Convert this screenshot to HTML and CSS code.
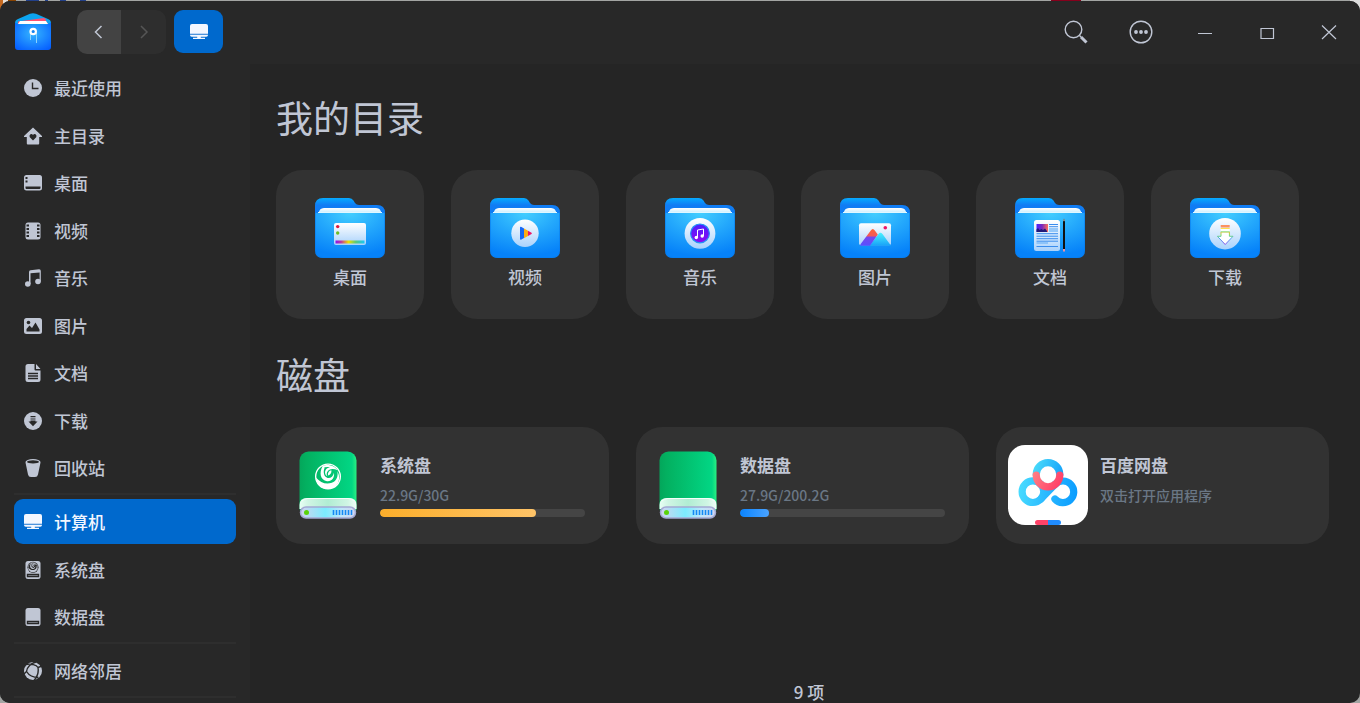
FILE: index.html
```html
<!DOCTYPE html>
<html lang="zh-CN">
<head>
<meta charset="utf-8">
<title>计算机</title>
<link rel="stylesheet" href="styles.css">
</head>
<body>
<svg class="defs" width="0" height="0" aria-hidden="true">
  <defs>
    <linearGradient id="folderBack" x1="0" y1="0" x2="0" y2="1"><stop offset="0" stop-color="#06abff"/><stop offset=".3" stop-color="#107cf4"/><stop offset="1" stop-color="#0a7cf5"/></linearGradient>
    <radialGradient id="folderFront" cx=".5" cy="0" r=".95"><stop offset="0" stop-color="#42ceff"/><stop offset=".5" stop-color="#22a6fc"/><stop offset="1" stop-color="#0682f9"/></radialGradient>
    <linearGradient id="plate" x1="0" y1="0" x2="0" y2="1"><stop offset="0" stop-color="#fff"/><stop offset="1" stop-color="#a9d2fc"/></linearGradient>
    <linearGradient id="paper" x1="0" y1="0" x2="0" y2="1"><stop offset="0" stop-color="#fff"/><stop offset="1" stop-color="#b9e9ff"/></linearGradient>
    <linearGradient id="rainbow"><stop offset="0" stop-color="#8a10ee"/><stop offset=".2" stop-color="#c33b98"/><stop offset=".45" stop-color="#eee000"/><stop offset=".7" stop-color="#5ac87c"/><stop offset="1" stop-color="#16c8fa"/></linearGradient>
    <linearGradient id="violet" x1="0" y1="0" x2="0" y2="1"><stop offset="0" stop-color="#4820ff"/><stop offset="1" stop-color="#9108f0"/></linearGradient>
    <linearGradient id="peakA" x1="0" y1="0" x2="0" y2="1"><stop offset="0" stop-color="#ff6434"/><stop offset=".4" stop-color="#f35a58"/><stop offset=".5" stop-color="#7448ee"/><stop offset="1" stop-color="#5950ff"/></linearGradient>
    <linearGradient id="peakB" x1="0" y1="0" x2="0" y2="1"><stop offset="0" stop-color="#4af2ff"/><stop offset="1" stop-color="#18a2f8"/></linearGradient>
    <linearGradient id="photo"><stop offset="0" stop-color="#4a20ff"/><stop offset=".5" stop-color="#7c2aba"/><stop offset="1" stop-color="#ff705a"/></linearGradient>
    <linearGradient id="arrow" x1="0" y1="0" x2="0" y2="1"><stop offset="0" stop-color="#ffb52e"/><stop offset=".25" stop-color="#7be05a"/><stop offset=".5" stop-color="#49a8f2"/><stop offset="1" stop-color="#8a50e8"/></linearGradient>
    <linearGradient id="green"><stop offset="0" stop-color="#04a65b"/><stop offset=".12" stop-color="#03b060"/><stop offset=".92" stop-color="#02d684"/><stop offset="1" stop-color="#2aef83"/></linearGradient>
    <linearGradient id="band"><stop offset="0" stop-color="#e8fff4"/><stop offset=".15" stop-color="#d0f5e4"/><stop offset=".5" stop-color="#b1edd3"/><stop offset=".85" stop-color="#d0f5e4"/><stop offset="1" stop-color="#f0fff8"/></linearGradient>
    <linearGradient id="strip"><stop offset="0" stop-color="#d2d4ee"/><stop offset=".45" stop-color="#7cecff"/><stop offset=".75" stop-color="#bfe6fb"/><stop offset="1" stop-color="#d2d4ee"/></linearGradient>
    <linearGradient id="cloud" gradientUnits="userSpaceOnUse" x1="10" y1="40" x2="70" y2="48"><stop offset="0" stop-color="#49ddff"/><stop offset=".5" stop-color="#29b8ff"/><stop offset="1" stop-color="#0a9cff"/></linearGradient>
    <linearGradient id="cloudTop" gradientUnits="userSpaceOnUse" x1="26" y1="20" x2="54" y2="30"><stop offset="0" stop-color="#49dbfa"/><stop offset="1" stop-color="#15a2fa"/></linearGradient>
    <linearGradient id="cloudRed" gradientUnits="userSpaceOnUse" x1="26" y1="28" x2="52" y2="42"><stop offset="0" stop-color="#ff7d84"/><stop offset="1" stop-color="#ff3d67"/></linearGradient>
    <radialGradient id="env" cx=".5" cy=".4" r=".7"><stop offset="0" stop-color="#35b5ff"/><stop offset="1" stop-color="#0660ff"/></radialGradient>
    <symbol id="folder" viewBox="0 0 70 60">
      <path d="M0 8Q0 0 8 0H34Q37 0 38.500 2.500L40 5Q41.500 7 44 7H62Q70 7 70 15V24H0Z" fill="url(#folderBack)"/>
      <path d="M3.500 16Q4 10 9 10H61Q66 10 66.500 16Z" fill="url(#paper)"/>
      <path d="M0 15H70V52Q70 60 62 60H8Q0 60 0 52Z" fill="url(#folderFront)"/>
      <path d="M.5 15V52Q.5 59.500 8 59.500H62Q69.500 59.500 69.500 52V15" fill="none" stroke="#087cec" stroke-opacity=".55"/>
      <path d="M3 14.500H67" stroke="#dff7ff" stroke-width="1"/>
    </symbol>
    <symbol id="drive" viewBox="0 0 58 68">
      <rect x=".5" y=".5" width="57" height="66" rx="9" fill="url(#green)"/>
      <path d="M.5 58V54Q.5 47 8 47H50Q57.500 47 57.500 54V58Z" fill="url(#band)"/>
      <path d="M3 50Q5 47.500 9 47.500H49Q53 47.500 55 50" fill="none" stroke="#f4fffa"/>
      <rect x="1.500" y="56" width="55" height="11" rx="5.500" fill="url(#strip)" stroke="#a4a9d4" stroke-width="1.500"/>
      <circle cx="7.500" cy="61.500" r="2.500" fill="#5bd30a"/>
      <path d="M34.500 59v5M37.500 59v5M40.500 59v5M43.500 59v5M46.500 59v5M49.500 59v5M52.500 59v5" stroke="#1489f4" stroke-width="1.600"/>
    </symbol>
    <symbol id="swirl" viewBox="0 0 28 28">
      <circle cx="14" cy="14" r="12.800" fill="none" stroke="currentColor" stroke-width="1.400"/>
      <path d="M1.500 15C6 20.500 12 22.500 18 20.500C23 18.500 25 13.500 23.500 8.500C28.500 16 24 27 14 27C7 27 2 22 1.500 15Z" fill="currentColor"/>
      <path d="M8.500 3C4.500 10 6 17.500 13 18.800C18 19.300 21 15 20.200 10C19.300 14 16.800 16 13.600 15.500C9.800 14.500 8.600 9.500 10.500 5Z" fill="currentColor"/>
      <path d="M8.500 2.500C14 1 21 2.500 24 7.500C19.500 5.300 15 5.800 13 9.500C12.200 11.500 12.600 13.500 14.500 14C10.500 13.500 10 8.500 12.500 6C13.500 5 15 4.500 16 4.300C13.500 3.800 11 4.200 8.500 5Z" fill="currentColor"/>
      <path d="M14 13C13.500 10 15 8 17.500 7.500C18 10 16.500 12.500 14 13Z" fill="currentColor"/>
    </symbol>
    <symbol id="monitor" viewBox="0 0 18 18">
      <path d="M0 3Q0 1 2 1H16Q18 1 18 3V11H0Z" fill="currentColor"/>
      <path d="M0 11.700H18V12Q18 13.700 16.300 13.700H1.700Q0 13.700 0 12ZM7.200 13.500h3.600v1.200H15v1.300H3v-1.300h4.200Z" fill="currentColor"/>
      <path d="M0 10.900H18" stroke="#7aaee7" stroke-width=".7"/>
    </symbol>
  </defs>
</svg>
<div class="window">
  <header class="titlebar">
    <svg class="app-icon" viewBox="0 0 36 37" aria-hidden="true">
      <path d="M0 10Q0 7 3 6L15 .8Q18-.3 21 .8L33 6Q36 7 36 10V20H0Z" fill="#0ca4ef"/>
      <path d="M3 8.500L29 5Q31 5.500 31 8L33 11H3Z" fill="#ff5070"/>
      <path d="M3 11L5 8H31L33 11Z" fill="#fff"/>
      <path d="M0 9.500L4 11.500H32L36 9.500V34Q36 37 33 37H3Q0 37 0 34Z" fill="url(#env)"/>
      <path d="M15.500 20V27M21.500 20V30" stroke="#8bd4ff" stroke-width="1"/>
      <circle cx="18.200" cy="18.500" r="2.700" fill="#1685ef" stroke="#fff" stroke-width="2.200"/>
    </svg>
    <nav class="history" aria-label="历史">
      <button class="history-button" type="button" aria-label="后退"><svg viewBox="0 0 16 16"><path d="M10.500 2L4.500 8L10.500 14"/></svg></button>
      <button class="history-button history-button-off" type="button" aria-label="前进" disabled><svg viewBox="0 0 16 16"><path d="M5 2L11 8L5 14"/></svg></button>
    </nav>
    <button class="crumb" type="button" aria-label="计算机"><svg viewBox="0 0 18 18"><use href="#monitor"/></svg></button>
    <div class="tools">
      <button class="tool" type="button" aria-label="搜索"><svg viewBox="0 0 24 24"><circle cx="9.500" cy="9.500" r="8.300"/><path d="M15.500 15.500L17 17"/><path d="M17 17L22.500 22.500" stroke-width="3"/></svg></button>
      <button class="tool" type="button" aria-label="菜单"><svg viewBox="0 0 24 24"><circle cx="12" cy="12" r="10.800"/><path d="M7 12h.01M12 12h.01M17 12h.01" stroke-width="3.800" stroke-linecap="round"/></svg></button>
    </div>
    <div class="window-buttons">
      <button class="window-button" type="button" aria-label="最小化"><svg viewBox="0 0 16 16"><path d="M1 9.500H15"/></svg></button>
      <button class="window-button" type="button" aria-label="最大化"><svg viewBox="0 0 16 16"><path d="M2 4.500H14.500V14.500H2Z"/></svg></button>
      <button class="window-button" type="button" aria-label="关闭"><svg viewBox="0 0 16 16"><path d="M1 1.500L15 15M15 1.500L1 15"/></svg></button>
    </div>
  </header>
  <div class="body">
    <nav class="sidebar" aria-label="位置">
      <div class="places">
        <a class="place" href="#recent"><svg viewBox="0 0 18 18"><circle cx="9" cy="9" r="9"/><path class="cut-line" d="M8.500 3.500V9.500H14.500"/></svg>最近使用</a>
        <a class="place" href="#home"><svg viewBox="0 0 18 18"><path d="M9 .5L18 9V10H15.200V16.500Q15.200 17.500 14.200 17.500H3.800Q2.800 17.500 2.800 16.500V10H0V9Z"/><path class="cut" d="M9 13.500L5.800 10.200C4.500 8 7.500 5.800 9 8C10.500 5.800 13.500 8 12.200 10.200Z"/></svg>主目录</a>
        <a class="place" href="#desktop"><svg viewBox="0 0 18 18"><rect y="1" width="18" height="15.500" rx="2.500"/><path class="cut" d="M1.500 3H3.500V5H1.500ZM1.500 6.500H3.500V8.500H1.500ZM1.500 12.500H16.500V14Q16.500 15 15.500 15H2.500Q1.500 15 1.500 14Z"/></svg>桌面</a>
        <a class="place" href="#videos"><svg viewBox="0 0 18 18"><rect x="1.500" y=".5" width="15" height="17" rx="2.500"/><path class="cut" d="M2.500 2.500h2.500v2H2.500ZM2.500 6h2.500v2H2.500ZM2.500 9.500h2.500v2H2.500ZM2.500 13h2.500v2H2.500ZM13 2.500h2.500v2H13ZM13 6h2.500v2H13ZM13 9.500h2.500v2H13ZM13 13h2.500v2H13Z"/></svg>视频</a>
        <a class="place" href="#music"><svg viewBox="0 0 18 18"><circle cx="3.800" cy="15" r="2.800"/><circle cx="14" cy="12.500" r="2.800"/><path d="M5 15V3Q5 1.400 6.500 1.200L15 .3Q16.800.2 16.800 2V12.500H15.600V3.500L6.500 4.300V15Z"/></svg>音乐</a>
        <a class="place" href="#pictures"><svg viewBox="0 0 18 18"><rect y="1" width="18" height="16" rx="2.500"/><circle class="cut" cx="4.500" cy="5.500" r="1.800"/><path class="cut" d="M2.500 14.500V12L5.500 8.500L8 11L11.500 5.500L15.500 12.500V14.500Z"/></svg>图片</a>
        <a class="place" href="#documents"><svg viewBox="0 0 18 18"><path d="M4 0H10.500V5.500Q10.500 6.500 11.500 6.500H16.500V15.500Q16.500 18 14 18H4Q1.500 18 1.500 15.500V2.500Q1.500 0 4 0ZM12 0L16.500 5H12Z"/><path class="cut-line" stroke-width="1.100" d="M4 9.500H14M4 12H14M4 14.500H14"/></svg>文档</a>
        <a class="place" href="#downloads"><svg viewBox="0 0 18 18"><circle cx="9" cy="9" r="9"/><path class="cut" d="M6.500 4H11.500V5.200H6.500ZM6.500 6.400H11.500V7.400H6.500ZM6.500 8.500H11.500V9.500H13.500L9 14.300L4.500 9.500H6.500Z"/></svg>下载</a>
        <a class="place" href="#trash"><svg viewBox="0 0 18 18"><path d="M1.500 3.500L4 15.500Q4.500 18 7 18H11Q13.500 18 14 15.500L16.500 3.500Z"/><ellipse cx="9" cy="3" rx="7.500" ry="3"/><ellipse class="cut" cx="9" cy="2.900" rx="6" ry="1.600"/></svg>回收站</a>
      </div>
      <hr class="rule">
      <div class="places">
        <a class="place place-current" href="#computer" aria-current="page"><svg viewBox="0 0 18 18"><use href="#monitor"/></svg>计算机</a>
        <a class="place" href="#system"><svg viewBox="0 0 18 18"><rect x="1.500" width="15" height="18" rx="2.500"/><circle class="cut" cx="9" cy="6.300" r="5.500"/><svg class="mini-mark" x="3.800" y="1.100" width="10.400" height="10.400"><use href="#swirl"/></svg><path class="cut-line" stroke-width="1" d="M3.500 13.500H14.500V15.500H3.500Z"/></svg>系统盘</a>
        <a class="place" href="#data"><svg viewBox="0 0 18 18"><rect x="1.500" width="15" height="18" rx="2.500"/><path class="cut-line" stroke-width="1" d="M3.500 13.500H14.500V15.500H3.500Z"/></svg>数据盘</a>
      </div>
      <hr class="rule">
      <div class="places">
        <a class="place" href="#network"><svg viewBox="0 0 18 18"><circle cx="9" cy="9" r="9"/><path class="cut-line" d="M12 0C7 1 3 5 2.500 9.500C5 13.500 9 15.500 14.500 15.500M2 2.500C7 1.500 12.500 3 14 5.500C15 11 13 15 10 18.500M0 12.500Q1 10.500 2.500 9.500M14 5.500Q16.500 4.500 17 4.500"/></svg>网络邻居</a>
      </div>
      <hr class="rule">
    </nav>
    <main class="main">
      <section>
        <h2 class="heading">我的目录</h2>
        <div class="folders">
          <a class="folder" href="#desktop"><svg viewBox="0 0 70 60"><use href="#folder"/><rect x="19" y="25" width="32" height="22" rx="2" fill="url(#plate)"/><rect x="20.500" y="42.500" width="29" height="3" fill="url(#rainbow)"/><circle cx="22.700" cy="28.600" r="1.700" fill="#df183c"/><circle cx="22.700" cy="35" r="1.700" fill="#6bbd24"/></svg>桌面</a>
          <a class="folder" href="#videos"><svg viewBox="0 0 70 60"><use href="#folder"/><circle cx="35" cy="35.300" r="13.700" fill="url(#plate)"/><path d="M30 29.500Q30 28.500 31.500 29L34 30.500V40L31.500 41.500Q30 42 30 41Z" fill="#1769f5"/><path d="M34 30.500L38 32.700V38L34 40.200Z" fill="#ffac14"/><path d="M38 32.700L41.500 34.700Q42.300 35.300 41.500 36L38 38Z" fill="#ee1568"/></svg>视频</a>
          <a class="folder" href="#music"><svg viewBox="0 0 70 60"><use href="#folder"/><circle cx="35" cy="35.400" r="15.400" fill="url(#plate)"/><circle cx="35" cy="35.400" r="9.400" fill="url(#violet)" stroke="#2392f5" stroke-width="1.200"/><circle cx="31.300" cy="39.500" r="1.700" fill="#fff"/><circle cx="37.200" cy="38" r="1.700" fill="#fff"/><path d="M32.500 39.500V32L38.500 31V38" fill="none" stroke="#fff" stroke-width="1"/></svg>音乐</a>
          <a class="folder" href="#pictures"><svg viewBox="0 0 70 60"><use href="#folder"/><rect x="19" y="25.300" width="32" height="22" rx="2" fill="url(#plate)"/><path d="M38.500 36Q40.300 33.500 42.500 36L51 47.700H29.500Z" fill="url(#peakB)"/><path d="M30.800 32.500Q32.800 29.500 34.800 32.500L37.800 36.500L30 47.700H21Q19.500 47.700 20.500 46.200Z" fill="url(#peakA)"/><circle cx="45.300" cy="29.800" r="1.800" fill="#ee1568"/></svg>图片</a>
          <a class="folder" href="#documents"><svg viewBox="0 0 70 60"><use href="#folder"/><rect x="19" y="22" width="26" height="31" rx="2.500" fill="url(#plate)"/><rect x="21.500" y="26" width="11.500" height="8" fill="url(#photo)"/><path d="M21.500 34V31.500L23 30L24.500 32L26.500 31L28 32L30 30.500L32 33V34Z" fill="#221a78"/><path d="M34 26.500H43M34 28.700H43M21.500 35.700H43M21.500 38.200H43M21.500 40.700H43M21.500 43.200H43M21.500 48.500H43" stroke="#3a8ded" stroke-width="1"/><path d="M34 31H43M34 33H43M21.500 45H33" stroke="#7ebcf8" stroke-width="1.500"/><path d="M48 24L49 20.500L50 24V51.500H48Z" fill="#111"/><path d="M48.300 23L49 20.500L49.700 23Z" fill="#d8b594"/><path d="M48 51H50V53.500H48Z" fill="#ee91a4"/></svg>文档</a>
          <a class="folder" href="#downloads"><svg viewBox="0 0 70 60"><use href="#folder"/><circle cx="35" cy="35.700" r="15.800" fill="url(#plate)"/><path d="M31 34H39.400V38.300H43L35.200 46.500L27.400 38.300H31Z" fill="#fff" stroke="url(#arrow)" stroke-width="1"/><path d="M30.700 27H39.700V29.500H30.700Z" fill="#fb9261"/><path d="M30.700 30.500H39.700V33.500H30.700Z" fill="#fff"/><path d="M30.700 30.500H39.700" stroke="#ffe04c"/><path d="M30.700 33.800H39.700" stroke="#8ee486"/></svg>下载</a>
        </div>
      </section>
      <section class="disk-section">
        <h2 class="heading">磁盘</h2>
        <div class="disks">
          <a class="disk" href="#system">
            <svg class="drive" viewBox="0 0 58 68"><use href="#drive"/><svg class="drive-mark" x="15.500" y="12" width="27" height="27"><use href="#swirl"/></svg></svg>
            <span class="disk-info"><strong class="disk-name">系统盘</strong><span class="disk-note">22.9G/30G</span><progress class="usage usage-high" value="22.9" max="30" aria-label="系统盘已用空间"></progress></span>
          </a>
          <a class="disk" href="#data">
            <svg class="drive" viewBox="0 0 58 68"><use href="#drive"/></svg>
            <span class="disk-info"><strong class="disk-name">数据盘</strong><span class="disk-note">27.9G/200.2G</span><progress class="usage" value="27.9" max="200.2" aria-label="数据盘已用空间"></progress></span>
          </a>
          <a class="disk disk-app" href="#netdisk">
            <svg class="netdisk" viewBox="0 0 80 80"><rect width="80" height="80" rx="17" fill="#fff"/><g fill="none" stroke-width="7.200" stroke-linecap="round"><path d="M47.400 39.100A10.800 10.800 0 1 1 46.900 54" stroke="url(#cloud)"/><path d="M47.400 39.100L32.600 54.300A10.800 10.800 0 1 1 32.600 39.100" stroke="url(#cloud)"/><path d="M32.600 39.100A10.800 10.800 0 0 1 32.600 54.300" stroke="url(#cloud)"/><path d="M28.200 29.500A11.800 11.800 0 0 1 51.800 29.500" stroke="url(#cloudTop)"/><path d="M28.200 30A11.800 11.800 0 0 0 51.800 30" stroke="url(#cloudRed)"/></g><path d="M40 75H29.500Q27 75 27 77.500T29.500 80H40Z" fill="#ff4268"/><path d="M40 75H50.500Q53 75 53 77.500T50.500 80H40Z" fill="#208cff"/></svg>
            <span class="disk-info"><strong class="disk-name">百度网盘</strong><span class="disk-note">双击打开应用程序</span></span>
          </a>
        </div>
      </section>
      <footer class="status">9 项</footer>
    </main>
  </div>
</div>
</body>
</html>
```
FILE: styles.css
```css
* {
  box-sizing: border-box;
}

body {
  margin: 0;
  min-height: 100vh;
  display: flex;
  flex-direction: column;
  padding-top: 1px;
  background: #a3a5a3 linear-gradient(90deg, #c76a20 3px, #e8e0d8 3px 8px, #8a4300 8px 16px, #a3a5a3 16px 26px, #22408a 26px 39px, #a3a5a3 39px 45px, #22408a 45px 48px, #a3a5a3 48px 60px, #22408a 60px 66px, #a3a5a3 66px 80px, #22408a 80px 86px, #a3a5a3 86px 1051px, #86001c 1051px 1081px, #a3a5a3 1081px 1350px, #dcdcdc 1350px) 0 0 / 100% 12px no-repeat;
  color: #c0c6d4;
  font-family: "Noto Sans CJK SC", "Noto Sans", sans-serif;
  font-size: 17px;
  font-weight: 500;
  line-height: 24px;
}

a {
  color: inherit;
  text-decoration: none;
}

button {
  display: grid;
  place-items: center;
  margin: 0;
  padding: 0;
  border: 0;
  background: none;
  color: inherit;
}

.defs {
  position: absolute;
}

.window {
  flex: 1;
  display: flex;
  flex-direction: column;
  overflow: hidden;
  border-radius: 10px;
  background: #252525;
}

.titlebar {
  display: flex;
  align-items: center;
  height: 63px;
  padding: 0 0 2px 15px;
  background: #282828;
}

.app-icon {
  width: 36px;
  height: 37px;
}

.history {
  display: flex;
  margin-left: 26px;
  overflow: hidden;
  border-radius: 10px;
  background: #2e2e2e;
}

.history-button {
  width: 44px;
  height: 44px;
  background: #434343;
}

.history-button-off {
  width: 45px;
  background: none;
  color: #555;
}

.history-button svg {
  width: 16px;
  height: 16px;
  fill: none;
  stroke: currentColor;
  stroke-width: 1.5;
}

.crumb {
  width: 49px;
  height: 43px;
  margin-left: 8px;
  border-radius: 9px;
  background: #0069cd;
  color: #f3f7ff;
}

.crumb svg {
  width: 18px;
  height: 18px;
}

.tools {
  display: flex;
  gap: 15px;
  margin-left: auto;
  margin-right: 8px;
}

.tool {
  width: 50px;
  height: 50px;
}

.tool svg {
  width: 24px;
  height: 24px;
  fill: none;
  stroke: currentColor;
  stroke-width: 1.4;
}

.window-buttons {
  display: flex;
}

.window-button {
  width: 62px;
  height: 50px;
}

.window-button svg {
  width: 16px;
  height: 16px;
  fill: none;
  stroke: currentColor;
  stroke-width: 1.2;
}

.body {
  flex: 1;
  display: flex;
}

.sidebar {
  width: 250px;
  padding: 0 14px;
  background: #282828;
}

.places {
  display: grid;
  grid-auto-rows: 48px 47px;
  align-items: start;
}

.place {
  display: flex;
  align-items: center;
  gap: 12px;
  height: 45px;
  margin-top: 1px;
  padding-left: 10px;
  border-radius: 9px;
}

.place svg {
  width: 18px;
  height: 18px;
  fill: currentColor;
}

.place .mini-mark {
  width: 10.4px;
  height: 10.4px;
}

.place .cut {
  fill: #282828;
}

.place .cut-line {
  fill: none;
  stroke: #282828;
  stroke-width: 1.4;
}

.place-current {
  background: #0069cd;
  color: #f3f7ff;
}

.rule {
  height: 2px;
  margin: 1px 0 3px;
  border: 0;
  background: #2e2e2e;
}

.main {
  flex: 1;
  display: flex;
  flex-direction: column;
  padding: 25px 26px 0;
}

.heading {
  margin: 0 0 25px;
  font-size: 37px;
  font-weight: 400;
  line-height: 56px;
}

.folders,
.disks {
  display: flex;
  flex-wrap: wrap;
  gap: 27px;
}

.folder {
  display: flex;
  flex-direction: column;
  align-items: center;
  gap: 7px;
  width: 148px;
  height: 149px;
  padding-top: 28px;
  border-radius: 26px;
  background: #323232;
}

.folder svg {
  width: 70px;
  height: 60px;
}

.disk-section {
  margin-top: 27px;
}

.disk {
  display: flex;
  align-items: center;
  gap: 23px;
  width: 333px;
  height: 117px;
  padding: 0 24px 2px 23px;
  border-radius: 26px;
  background: #323232;
}

.disk-app {
  gap: 12px;
  padding-left: 12px;
}

.drive {
  width: 58px;
  height: 68px;
}

.drive-mark {
  color: #fff;
}

.netdisk {
  width: 80px;
  height: 80px;
}

.disk-info {
  flex: 1;
  display: flex;
  flex-direction: column;
  align-self: stretch;
  padding-top: 26px;
}

.disk-name {
  font-weight: 700;
}

.disk-note {
  margin-top: 8px;
  color: #6a7785;
  font-size: 14px;
  line-height: 20px;
}

.usage {
  width: 100%;
  height: 8px;
  margin-top: 4px;
  appearance: none;
  overflow: hidden;
  border: 0;
  border-radius: 4px;
  background: #454545;
}

.usage::-webkit-progress-bar {
  background: #454545;
}

.usage::-webkit-progress-value {
  border-radius: 4px;
  background: linear-gradient(90deg, #0a84ff, #4aa3ff);
}

.usage-high::-webkit-progress-value {
  background: linear-gradient(90deg, #fbae2b, #ffc468);
}

.status {
  margin-top: auto;
  padding-left: 8px;
  text-align: center;
  line-height: 22px;
}
```
